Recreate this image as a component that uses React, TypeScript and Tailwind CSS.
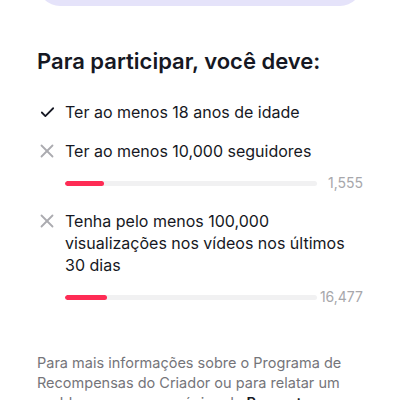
import { Check, X } from 'lucide-react';

type Req = {
    met: boolean;
    text: string;
    progress?: { pct: number; value: string };
};

const reqs: Req[] = [
    { met: true, text: 'Ter ao menos 18 anos de idade' },
    { met: false, text: 'Ter ao menos 10,000 seguidores', progress: { pct: 15.5, value: '1,555' } },
    {
        met: false,
        text: 'Tenha pelo menos 100,000 visualizações nos vídeos nos últimos 30 dias',
        progress: { pct: 16.5, value: '16,477' },
    },
];

function Requirement({ req }: { req: Req }) {
    return (
        <div className="flex flex-col">
            <div className="flex items-start gap-2">
                <div className="w-5 h-[22px] flex items-center justify-center shrink-0">
                    {req.met ? (
                        <Check className="w-[17px] h-[17px] text-[#161823] shrink-0" strokeWidth={2.5} />
                    ) : (
                        <X className="w-[22px] h-[22px] text-[#ababb0] shrink-0" strokeWidth={2} />
                    )}
                </div>
                <p className="text-[16px] leading-[22px] text-[#161823] pr-[6px]">{req.text}</p>
            </div>
            {req.progress && (
                <div className="flex items-center pl-[28px] mt-[11px] h-[20px]">
                    <div className="flex-1 h-[5px] rounded-full bg-[#f1f1f2] overflow-hidden">
                        <div className="h-full rounded-full bg-[#fe2c55]" style={{ width: `${req.progress.pct}%` }} />
                    </div>
                    <span className="w-[46px] text-right text-[14px] leading-[20px] text-[#a7a7ab]">{req.progress.value}</span>
                </div>
            )}
        </div>
    );
}

export default function App() {
    return (
        <div className="w-[400px] h-[400px] overflow-hidden bg-white font-['Inter',sans-serif]">
            <div className="mx-[38px] -mt-[40px] h-[46px] rounded-[22px] bg-[#e5e3fa]" />

            <div className="px-[37px]">
                <h2 className="mt-[41px] text-[22px] leading-[28px] font-semibold text-[#161823]">
                    Para participar, você deve:
                </h2>

                <div className="mt-[26px] flex flex-col gap-[17px]">
                    {reqs.map(r => (
                        <Requirement key={r.text} req={r} />
                    ))}
                </div>

                <p className="mt-[46px] text-[14.5px] leading-[20px] text-[#75757a]">
                    Para mais informações sobre o Programa de Recompensas do Criador ou para relatar um problema, acesse a página de{' '}
                    <span className="font-semibold text-[#161823]">Perguntas frequentes</span>.
                </p>
            </div>
        </div>
    );
}
